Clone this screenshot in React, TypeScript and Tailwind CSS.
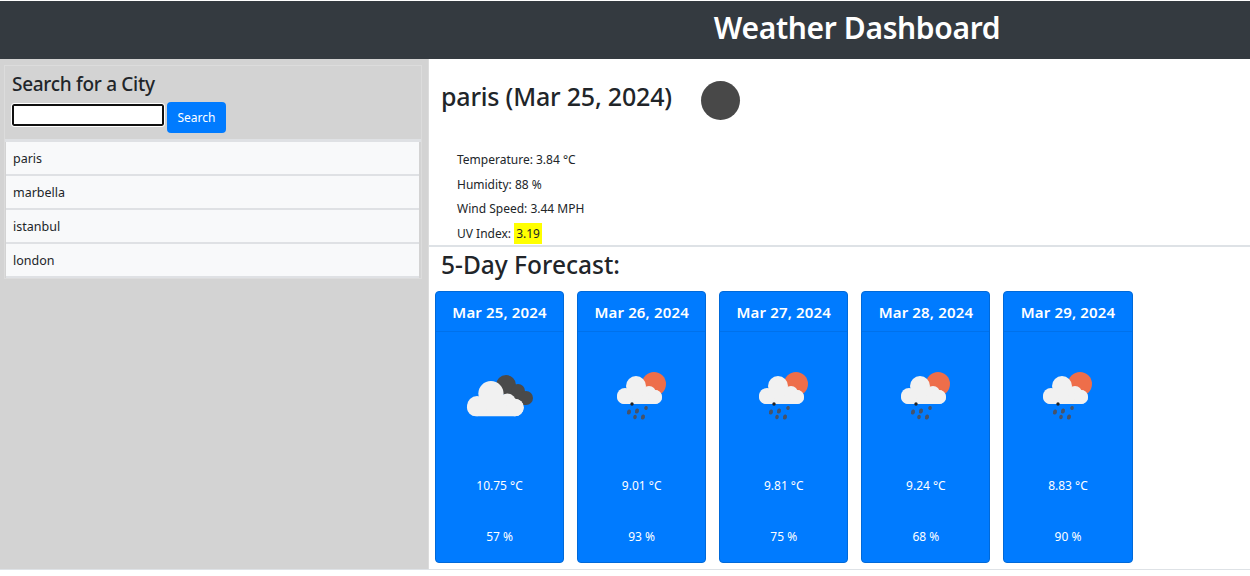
const font = { fontFamily: '"Noto Sans", "Open Sans", sans-serif' };

const cities = ['paris', 'marbella', 'istanbul', 'london'];

const forecast = [
  { date: 'Mar 25, 2024', icon: 'cloud', temp: '10.75 °C', humidity: '57 %' },
  { date: 'Mar 26, 2024', icon: 'rain', temp: '9.01 °C', humidity: '93 %' },
  { date: 'Mar 27, 2024', icon: 'rain', temp: '9.81 °C', humidity: '75 %' },
  { date: 'Mar 28, 2024', icon: 'rain', temp: '9.24 °C', humidity: '68 %' },
  { date: 'Mar 29, 2024', icon: 'rain', temp: '8.83 °C', humidity: '90 %' },
];

// white cloud body, same shape in both icons
function CloudBody({ x, y, s }: { x: number; y: number; s: number }) {
  return (
    <g transform={`translate(${x} ${y}) scale(${s})`} fill="#f1f1f1">
      <rect x="0" y="14" width="45" height="14" rx="7" />
      <circle cx="8" cy="20" r="8" />
      <circle cx="19" cy="10" r="10" />
      <circle cx="32" cy="17" r="7" />
      <circle cx="38" cy="21" r="7" />
    </g>
  );
}

function WeatherIcon({ type }: { type: string }) {
  if (type === 'cloud') {
    return (
      <svg width="101" height="60" viewBox="0 0 101 60">
        <g fill="#4a4a4a">
          <circle cx="57" cy="20" r="10" />
          <circle cx="69" cy="26" r="7" />
          <circle cx="77" cy="33" r="7" />
          <rect x="55" y="28" width="22" height="12" />
        </g>
        <CloudBody x={18} y={16} s={1.26} />
      </svg>
    );
  }
  return (
    <svg width="101" height="60" viewBox="0 0 101 60">
      <circle cx="63" cy="19" r="12" fill="#ee6e4a" />
      <CloudBody x={26} y={11} s={1} />
      <g fill="#46536a">
        <circle cx="41" cy="39" r="1.7" fill="#222" />
        <ellipse cx="38" cy="47" rx="2" ry="2.6" transform="rotate(15 38 47)" />
        <ellipse cx="46" cy="46" rx="2" ry="2.6" transform="rotate(15 46 46)" />
        <ellipse cx="55" cy="43" rx="1.8" ry="2" transform="rotate(15 55 43)" />
        <ellipse cx="44" cy="52" rx="1.8" ry="2.2" transform="rotate(15 44 52)" />
        <ellipse cx="52" cy="52" rx="2" ry="2.6" transform="rotate(15 52 52)" />
      </g>
    </svg>
  );
}

export default function App() {
  return (
    <div style={font} className="h-[576px] overflow-hidden bg-white text-[#212529]">
      <header className="mt-px h-[58px] bg-[#343a40] pl-[464px] text-center">
        <h1 className="text-[30px] font-semibold leading-[54px] tracking-[-0.35px] text-white">Weather Dashboard</h1>
      </header>

      <div className="flex h-[511px] border-b border-[#dee2e6]">
        <aside className="w-[429px] shrink-0 border-r border-[#dcdcdc] bg-[#d3d3d3] px-1 pt-1.5">
          <div className="w-[418px] border border-[#dcdcdc]">
            <div className="px-[7px] pt-[5px] pb-[6px]">
              <h2 className="text-[19px] font-medium leading-[26px] tracking-[-0.3px]">Search for a City</h2>
              <div className="mt-[5px] flex items-start">
                <input
                  className="mt-[2px] h-[22px] w-[152px] rounded-[2px] border-2 border-[#101010] bg-white outline outline-1 outline-white"
                  type="text"
                />
                <button className="ml-[3px] h-[31px] w-[59px] rounded-[4px] bg-[#007bff] pt-px text-[12px] text-white">
                  Search
                </button>
              </div>
            </div>
            <ul className="border-t-[3px] border-[#dfe1e4] pl-px pr-[2px]">
              {cities.map((city) => (
                <li
                  key={city}
                  className="h-[34px] border-b-2 border-[#dfe1e4] bg-[#f8f9fa] pl-[7px] text-[12.5px] leading-[34px]"
                >
                  {city}
                </li>
              ))}
            </ul>
          </div>
        </aside>

        <main className="min-w-0 flex-1">
          <div className="h-[188px] border-b-2 border-[#dee2e6]">
            <div className="flex items-start pl-3 pt-5">
              <h2 className="text-[25px] font-medium leading-[34px] tracking-[-0.2px]">paris (Mar 25, 2024)</h2>
              <div className="ml-[29px] mt-[2px] h-[39px] w-[39px] rounded-full bg-[#484848]" />
            </div>
            <div className="pl-7 pt-7 text-[12px] leading-[24.6px]">
              <p>Temperature: 3.84 °C</p>
              <p>Humidity: 88 %</p>
              <p>Wind Speed: 3.44 MPH</p>
              <p>
                UV Index: <span className="inline-block bg-[#ffff00] px-0.5 leading-[21px]">3.19</span>
              </p>
            </div>
          </div>

          <h2 className="pl-3 pt-[1px] text-[24.5px] font-medium leading-[33px]">5-Day Forecast:</h2>

          <div className="mt-[10px] flex gap-[13.02px] pl-1.5">
            {forecast.map((day) => (
              <div
                key={day.date}
                className="flex h-[272px] w-[129.1px] flex-col items-center rounded-[4px] border border-[#0069d9] bg-[#007bff] text-white"
              >
                <div className="h-[40px] w-full border-b border-[#0071eb] text-center text-[15px] font-semibold leading-[40px] tracking-[0.15px]">
                  {day.date}
                </div>
                <div className="mt-[33px] flex h-[60px] w-full items-center justify-center">
                  <WeatherIcon type={day.icon} />
                </div>
                <p className="mt-[51px] text-[12px] leading-[20px]">{day.temp}</p>
                <p className="mt-[31px] text-[12px] leading-[20px]">{day.humidity}</p>
              </div>
            ))}
          </div>
        </main>
      </div>
    </div>
  );
}
